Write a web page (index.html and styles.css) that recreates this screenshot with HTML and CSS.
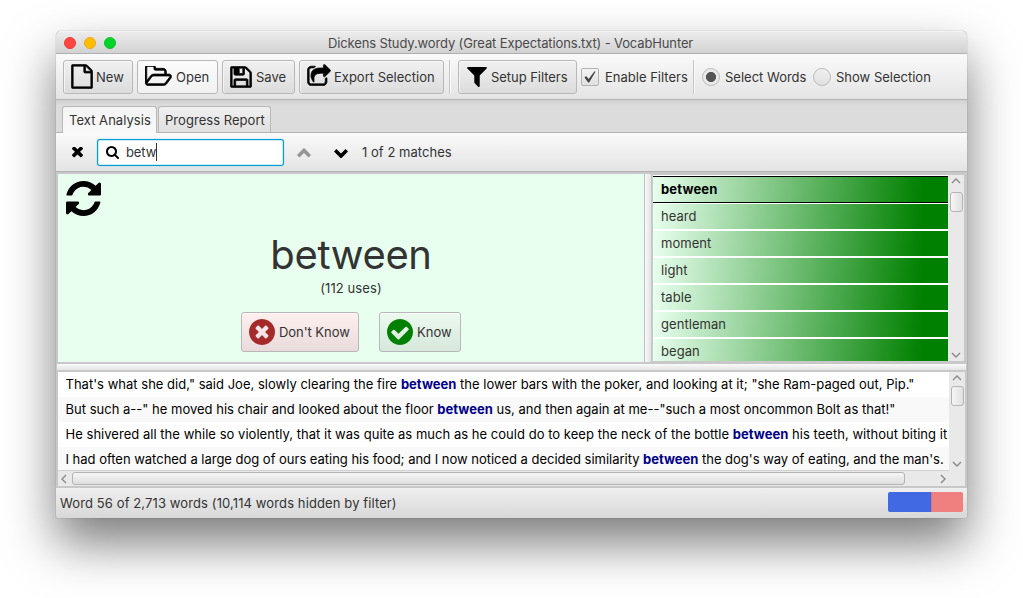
FILE: index.html
```html
<!DOCTYPE html>
<html lang="en">
<head>
<meta charset="utf-8">
<title>VocabHunter</title>
<link rel="stylesheet" href="styles.css">
</head>
<body>
<div class="window">
  <header class="titlebar">
    <div class="lights"><i class="light red"></i><i class="light amber"></i><i class="light green"></i></div>
    <span class="title">Dickens Study.wordy (Great Expectations.txt) - VocabHunter</span>
  </header>

  <nav class="toolbar">
    <button class="btn btn-new"><svg class="heavy" width="22" height="25" viewBox="98 -30 1596 1852" preserveAspectRatio="none"><path d="M1596 380q28 28 48 76t20 88v1152q0 40-28 68t-68 28h-1344q-40 0-68-28t-28-68v-1600q0-40 28-68t68-28h896q40 0 88 20t76 48zm-444-244v376h376q-10-29-22-41l-313-313q-12-12-41-22zm384 1528v-1024h-416q-40 0-68-28t-28-68v-416h-768v1536h1280z"/></svg><span>New</span></button>
    <button class="btn btn-open"><svg class="heavy" width="27" height="20" viewBox="64 226 1940 1340" preserveAspectRatio="none"><path d="M1845 931q0-35-53-35h-1088q-40 0-85.5 21.5t-71.5 52.5l-294 363q-18 24-18 40 0 35 53 35h1088q40 0 86-22t71-53l294-363q18-22 18-39zm-1141-163h768v-160q0-40-28-68t-68-28h-576q-40 0-68-28t-28-68v-64q0-40-28-68t-68-28h-320q-40 0-68 28t-28 68v853l256-315q44-53 116-87.500t140-34.500zm1269 163q0 62-46 120l-295 363q-43 53-116 87.500t-140 34.500h-1088q-92 0-158-66t-66-158v-960q0-92 66-158t158-66h320q92 0 158 66t66 158v32h544q92 0 158 66t66 158v160h192q54 0 99 24.500t67 70.500q15 32 15 68z"/></svg><span>Open</span></button>
    <button class="btn btn-save"><svg class="heavy" width="22" height="22" viewBox="98 98 1596 1596"><path d="M512 1536h768v-384h-768v384zm896 0h128v-896q0-14-10-38.500t-20-34.500l-281-281q-10-10-34-20t-39-10v416q0 40-28 68t-68 28h-576q-40 0-68-28t-28-68v-416h-128v1280h128v-416q0-40 28-68t68-28h832q40 0 68 28t28 68v416zm-384-928v-320q0-13-9.500-22.500t-22.500-9.500h-192q-13 0-22.500 9.500t-9.500 22.500v320q0 13 9.500 22.500t22.500 9.500h192q13 0 22.500-9.500t9.500-22.500zm640 32v928q0 40-28 68t-68 28h-1344q-40 0-68-28t-28-68v-1344q0-40 28-68t68-28h928q40 0 88 20t76 48l280 280q28 28 48 76t20 88z"/></svg><span>Save</span></button>
    <button class="btn btn-export"><svg class="heavy" width="24" height="22" viewBox="34 -30 1724 1596" preserveAspectRatio="none"><path d="M1472 989v259q0 119-84.500 203.500t-203.500 84.500h-832q-119 0-203.500-84.500t-84.500-203.500v-832q0-119 84.500-203.500t203.500-84.500h255q13 0 22.500 9.500t9.500 22.500q0 27-26 32-77 26-133 60-10 4-16 4h-112q-66 0-113 47t-47 113v832q0 66 47 113t113 47h832q66 0 113-47t47-113v-214q0-19 18-29 28-13 54-37 16-16 35-8 21 9 21 29zm237-496l-384 384q-18 19-45 19-12 0-25-5-39-17-39-59v-192h-160q-323 0-438 131-119 137-74 473 3 23-20 34-8 2-12 2-16 0-26-13-10-14-21-31t-39.500-68.500-49.500-99.500-38.500-114-17.500-122q0-49 3.500-91t14-90 28-88 47-81.500 68.500-74 94.500-61.500 124.500-48.500 159.500-30.500 196.500-11h160v-192q0-42 39-59 13-5 25-5 26 0 45 19l384 384q19 19 19 45t-19 45z"/></svg><span>Export Selection</span></button>
    <i class="sep sep-a"></i>
    <button class="btn btn-filter"><svg width="20" height="20" viewBox="186 256 1420 1408" preserveAspectRatio="none"><path d="M1595 295q17 41-14 70l-493 493v742q0 42-39 59-13 5-25 5-27 0-45-19l-256-256q-19-19-19-45v-486l-493-493q-31-29-14-70 17-39 59-39h1280q42 0 59 39z"/></svg><span>Setup Filters</span></button>
    <label class="check"><span class="box"><svg width="14" height="14" viewBox="0 0 14 14"><path d="M1.500 7.500L3 6l2.700 3L11.500 1.200l1 .6L6.200 12.600H5.100z"/></svg></span><span class="lbl">Enable Filters</span></label>
    <i class="sep sep-b"></i>
    <label class="radio r1"><span class="dot on"></span><span class="lbl">Select Words</span></label>
    <label class="radio r2"><span class="dot"></span><span class="lbl">Show Selection</span></label>
  </nav>

  <div class="tabs">
    <span class="tab active"><span>Text Analysis</span></span>
    <span class="tab"><span>Progress Report</span></span>
  </div>

  <div class="search">
    <svg class="close" width="11" height="11" viewBox="302 302 1188 1188"><path transform="translate(0 -132)" d="M1490 1322q0 40-28 68l-136 136q-28 28-68 28t-68-28l-294-294-294 294q-28 28-68 28t-68-28l-136-136q-28-28-28-68t28-68l294-294-294-294q-28-28-28-68t28-68l136-136q28-28 68-28t68 28l294 294 294-294q28-28 68-28t68 28l136 136q28 28 28 68t-28 68l-294 294 294 294q28 28 28 68z"/></svg>
    <div class="field">
      <svg width="13" height="13" viewBox="64 128 1664 1664"><path d="M1216 832q0-185-131.500-316.500t-316.500-131.500-316.500 131.500-131.500 316.500 131.500 316.500 316.500 131.500 316.500-131.500 131.500-316.500zm512 832q0 52-38 90t-90 38q-54 0-90-38l-343-342q-179 124-399 124-143 0-273.500-55.500t-225-150-150-225-55.500-273.500 55.500-273.500 150-225 225-150 273.500-55.500 273.500 55.500 225 150 150 225 55.500 273.500q0 220-124 399l343 343q37 37 37 90z"/></svg>
      <span class="query">betw</span><i class="caret"></i>
    </div>
    <svg class="up" width="14" height="10" viewBox="0 0 14 10"><path d="M1.200 8.200L7 2.400l5.800 5.800"/></svg>
    <svg class="down" width="14" height="10" viewBox="0 0 14 10"><path d="M1.200 2.300L7 8.100l5.800-5.800"/></svg>
    <span class="matches">1 of 2 matches</span>
  </div>

  <div class="split">
    <main class="card">
      <svg class="refresh" width="35" height="35" viewBox="128 128 1536 1536"><path d="M1639 1056q0 5-1 7-64 268-268 434.500t-478 166.500q-146 0-282.500-55t-243.500-157l-129 129q-19 19-45 19t-45-19-19-45v-448q0-26 19-45t45-19h448q26 0 45 19t19 45-19 45l-137 137q71 66 161 102t187 36q134 0 250-65t186-179q11-17 53-117 8-23 30-23h192q13 0 22.500 9.500t9.500 22.500zm25-800v448q0 26-19 45t-45 19h-448q-26 0-45-19t-19-45 19-45l138-138q-148-137-349-137-134 0-250 65t-186 179q-11 17-53 117-8 23-30 23h-199q-13 0-22.500-9.500t-9.500-22.500v-7q65-268 270-434.500t480-166.500q146 0 284 55.500t245 156.500l130-129q19-19 45-19t45 19 19 45z"/></svg>
      <div class="word">between</div>
      <div class="uses">(112 uses)</div>
      <div class="answers">
        <button class="ans no"><svg width="26" height="26" viewBox="128 128 1536 1536"><path class="mark" d="M1277 1122q0-26-19-45l-181-181 181-181q19-19 19-45 0-27-19-46l-90-90q-19-18-46-18-26 0-45 18l-181 181-181-181q-19-18-45-18-27 0-46 18l-90 90q-19 19-19 46 0 26 19 45l181 181-181 181q-19 19-19 45 0 27 19 46l90 90q19 18 46 18 26 0 45-18l181-181 181 181q19 18 45 18 27 0 46-18l90-90q19-19 19-46zm387-226q0 209-103 385.500t-279.500 279.500-385.500 103-385.500-103-279.500-279.500-103-385.500 103-385.500 279.500-279.500 385.500-103 385.500 103 279.500 279.500 103 385.500z"/></svg><span>Don't Know</span></button>
        <button class="ans yes"><svg width="26" height="26" viewBox="128 128 1536 1536"><path d="M1412 734q0-28-18-46l-91-90q-19-19-45-19t-45 19l-408 407-226-226q-19-19-45-19t-45 19l-91 90q-18 18-18 46 0 27 18 45l362 362q19 19 45 19 27 0 46-19l543-543q18-18 18-45zm252 162q0 209-103 385.500t-279.500 279.500-385.500 103-385.500-103-279.500-279.500-103-385.500 103-385.500 279.500-279.500 385.500-103 385.500 103 279.500 279.500 103 385.500z"/></svg><span>Know</span></button>
      </div>
    </main>
    <i class="gutter"></i>
    <aside class="list">
      <ul class="words">
        <li class="sel">between</li><li>heard</li><li>moment</li><li>light</li><li>table</li><li>gentleman</li><li>began</li>
      </ul>
      <div class="vbar"><svg width="10" height="6" viewBox="0 0 10 6"><path d="M1 5l4-4 4 4"/></svg><i class="thumb"></i><svg width="10" height="6" viewBox="0 0 10 6"><path d="M1 1l4 4 4-4"/></svg></div>
    </aside>
  </div>

  <i class="hgutter"></i>

  <section class="uses-pane">
    <div class="lines">
      <p class="l1"><span>That's what she did," said Joe, slowly clearing the fire <b>between</b> the lower bars with the poker, and looking at it; "she Ram-paged out, Pip."</span></p>
      <p class="l2"><span>But such a--" he moved his chair and looked about the floor <b>between</b> us, and then again at me--"such a most oncommon Bolt as that!"</span></p>
      <p class="l3"><span>He shivered all the while so violently, that it was quite as much as he could do to keep the neck of the bottle <b>between</b> his teeth, without biting it</span></p>
      <p class="l4"><span>I had often watched a large dog of ours eating his food; and I now noticed a decided similarity <b>between</b> the dog's way of eating, and the man's.</span></p>
    </div>
    <div class="vbar low"><svg width="10" height="6" viewBox="0 0 10 6"><path d="M1 5l4-4 4 4"/></svg><i class="thumb"></i><svg width="10" height="6" viewBox="0 0 10 6"><path d="M1 1l4 4 4-4"/></svg></div>
    <div class="hbar"><svg width="6" height="10" viewBox="0 0 6 10"><path d="M5 1L1 5l4 4"/></svg><i class="hthumb"></i><svg width="6" height="10" viewBox="0 0 6 10"><path d="M1 1l4 4-4 4"/></svg></div>
    <i class="corner"></i>
  </section>

  <footer class="status"><span>Word 56 of 2,713 words (10,114 words hidden by filter)</span><div class="progress"><i class="known"></i><i class="unknown"></i></div></footer>
</div>
</body>
</html>
```
FILE: styles.css
```css
* { box-sizing: border-box; }
html, body { margin: 0; height: 100%; overflow: hidden; background: #fff; }
body { padding: 31px 56px 0; font: 13px/16px Inter, "Liberation Sans", sans-serif; color: #333; }
svg { display: block; flex: none; fill: #000; }
i { display: block; flex: none; }
span, p, li, .word { white-space: nowrap; }
button { font: inherit; color: inherit; margin: 0; }

.window {
  display: flex; flex-direction: column; width: 911px; height: 487px;
  border-radius: 5px 5px 2px 2px; background: #c8c8c8;
  box-shadow: 0 0 1px rgba(0,0,0,.5), 0 25px 50px rgba(0,0,0,.52);
  overflow: hidden;
}

.titlebar { display: flex; align-items: center; height: 23px; padding-left: 8px; background: linear-gradient(#ececec, #d2d2d2); border-bottom: 1px solid #b0b0b0; border-top: 1px solid #f4f4f4; }
.lights { display: flex; gap: 8px; width: 264px; padding-top: 1px; }
.light { width: 12px; height: 12px; border-radius: 50%; }
.red { background: #ff4642; border: 1px solid #ee3835; }
.amber { background: #ffbf00; border: 1px solid #eba71c; }
.green { background: #00d42b; border: 1px solid #12bd2c; }
.title { color: #4a4a4a; padding-top: 1px; letter-spacing: -.13px; }

.toolbar { display: flex; align-items: center; height: 46px; padding: 0 7px; background: linear-gradient(#fafafa, #e4e4e4); border-bottom: 1px solid #b2b2b2; }
.btn, .ans { display: flex; align-items: center; border: 1px solid #b8b8b8; border-radius: 3px; background: linear-gradient(#f1f1f1, #dcdcdc); box-shadow: inset 0 1px 0 #fafafa, inset 1px 0 0 #f4f4f4; padding: 0 0 0 7px; }
.btn { height: 34px; margin-right: 4px; gap: 4px; }
.heavy { stroke: #000; stroke-width: 50; }
.btn-new { width: 70px; gap: 3px; }
.btn-open { width: 81px; gap: 4px; background: linear-gradient(#fbfbfb, #f1f1f1); }
.btn-open svg { margin-top: -2px; }
.btn-save { width: 73px; gap: 4px; }
.btn-export { width: 145px; margin-right: 5px; gap: 3px; }
.btn-export svg { margin-top: -3px; }
.btn-filter { width: 119px; gap: 4px; padding-left: 8px; letter-spacing: -.05px; }
.sep { width: 2px; height: 34px; border-left: 1px solid #c6c6c6; background: #fafafa; }
.sep-a { margin-right: 7px; }
.check, .radio { display: flex; align-items: center; gap: 6px; }
.check { width: 111px; }
.box { width: 18px; height: 18px; border: 1px solid #b2b2b2; border-radius: 2px; background: linear-gradient(#f4f4f4, #e0e0e0); padding: 1px; }
.box svg { fill: #444; }
.sep-b { margin-left: 1px; margin-right: 7px; }
.radio { gap: 5px; }
.r1 { width: 111px; }
.dot { width: 18px; height: 18px; flex: none; border: 1px solid #bcbcbc; border-radius: 50%; background: linear-gradient(#f0f0f0, #e0e0e0); }
.on { background: radial-gradient(circle, #555 0 4.7px, #eaeaea 5.400px); }

.tabs { display: flex; align-items: flex-end; gap: 1px; height: 33px; padding-left: 6px; background: linear-gradient(#cfcfcf, #dcdcdc 5px, #dcdcdc); border-bottom: 1px solid #b2b2b2; }
.tab { height: 26px; width: 113px; padding: 5px 0 0 6px; border: 1px solid #b8b8b8; border-bottom: 0; border-radius: 3px 3px 0 0; background: linear-gradient(#f0f0f0, #e0e0e0); letter-spacing: .04px; }
.active { width: 95px; height: 27px; margin-bottom: -1px; background: linear-gradient(#f4f4f4, #f9f9f9); }

.search { display: flex; align-items: center; height: 39px; padding-left: 16px; background: linear-gradient(#fafafa, #e4e4e4); border-bottom: 1px solid #b2b2b2; }
.field { display: flex; align-items: center; width: 187px; height: 27px; margin-left: 14px; padding-left: 8px; background: #fff; border: 1px solid #039ed3; border-radius: 3px; box-shadow: inset 0 0 0 1px #cdeaf5, 0 0 1px #039ed3; }
.query { margin-left: 7px; letter-spacing: -.1px; }
.caret { width: 1px; height: 18px; background: #333; }
.up, .down { position: relative; top: 1px; fill: none; stroke: #000; stroke-width: 3.500; }
.up { stroke: #959595; margin-left: 13px; }
.down { margin-left: 23px; }
.matches { margin-left: 14px; letter-spacing: .04px; }

.split { display: flex; height: 190px; padding: 2px 1px 0 2px; background: #c8c8c8; }
.card { position: relative; display: flex; flex-direction: column; align-items: center; width: 586px; height: 188px; background: #e8ffef; }
.refresh { position: absolute; left: 8px; top: 7px; }
.word { margin-top: 57px; height: 48px; font-size: 40px; line-height: 48px; letter-spacing: -.35px; color: #333; }
.uses { margin-top: 1px; letter-spacing: .1px; }
.answers { display: flex; gap: 20px; margin-top: 16px; }
.ans { height: 40px; gap: 4px; }
.no { width: 118px; background: linear-gradient(#fff0f0, #e9dbdb); box-shadow: inset 0 1px 0 #fff6f6; letter-spacing: -.05px; }
.no svg { fill: #a52a2a; }
.yes { width: 82px; background: linear-gradient(#ecf9ef, #d7e7db); box-shadow: inset 0 1px 0 #f6fff8; }
.yes svg { fill: #008000; }
.gutter { width: 7px; height: 188px; border-left: 1px solid #c0c0c0; background: linear-gradient(90deg, #fafafa, #e2e2e2); }
.list { display: flex; width: 315px; height: 188px; padding: 1px 2px 1px; border-left: 0; background: #c8c8c8; }
.words { width: 295px; height: 186px; margin: 0; padding: 1px 0 0; list-style: none; overflow: hidden; background: #fff; }
.words li { height: 25px; margin-bottom: 2px; padding: 4px 8px; background: linear-gradient(95deg, #e8ffef, #008000 91%); letter-spacing: .05px; }
.words .sel { height: 27px; margin-bottom: 1px; border: solid #000; border-width: 1px 0; font-weight: 700; color: #000; letter-spacing: .15px; }
.vbar { display: flex; flex-direction: column; align-items: center; width: 16px; padding: 3px 0; background: #e9e9e9; }
.vbar svg, .hbar svg { fill: none; stroke: #8a8a8a; stroke-width: 1.400; }
.vbar .thumb { width: 13px; height: 20px; margin: 8px 0 auto; border: 1px solid #b4b4b4; border-radius: 3px; background: linear-gradient(90deg, #f6f6f6, #e0e0e0); }

.hgutter { height: 10px; border: solid #c8c8c8; border-width: 2px 1px 2px; background: linear-gradient(#fafafa, #e4e4e4); }

.uses-pane { display: grid; grid-template-columns: 891px 16px; grid-template-rows: 98px 16px; height: 116px; padding: 0 2px 2px; color: #000; }
.lines { overflow: hidden; background: #fff; }
.lines p { height: 25px; margin: 0; padding: 4px 8px 0; }
.lines p:nth-child(even) { background: #f9f9f9; }
.lines b { color: #00008b; }
.lines .l1 { letter-spacing: .015px; padding-left: 7.500px; }
.lines .l2 { letter-spacing: .01px; padding-left: 7.500px; }
.lines .l3 { letter-spacing: .03px; padding-left: 7.500px; }
.lines .l4 { letter-spacing: -.02px; padding-left: 7.500px; }
.low .thumb { margin-top: 5px; }
.hbar { display: flex; align-items: center; justify-content: space-between; padding: 0 3px; background: #e9e9e9; border-top: 1px solid #d0d0d0; }
.hthumb { width: 833px; height: 13px; margin: 0 auto 0 5px; border: 1px solid #b4b4b4; border-radius: 3px; background: linear-gradient(#f6f6f6, #dedede); }
.corner { background: #e9e9e9; }

.status { display: flex; justify-content: space-between; height: 30px; padding: 4px 4px 0; background: linear-gradient(#eee, #d8d8d8); border-top: 1px solid #f0f0f0; }
.status span { padding-top: 2px; letter-spacing: .11px; }
.progress { display: flex; width: 75px; height: 20px; margin-top: -1px; border-radius: 2px; overflow: hidden; }
.known { width: 43px; background: #4169e1; }
.unknown { width: 32px; background: #f08080; border-left: 1px solid #c87591; }
```
